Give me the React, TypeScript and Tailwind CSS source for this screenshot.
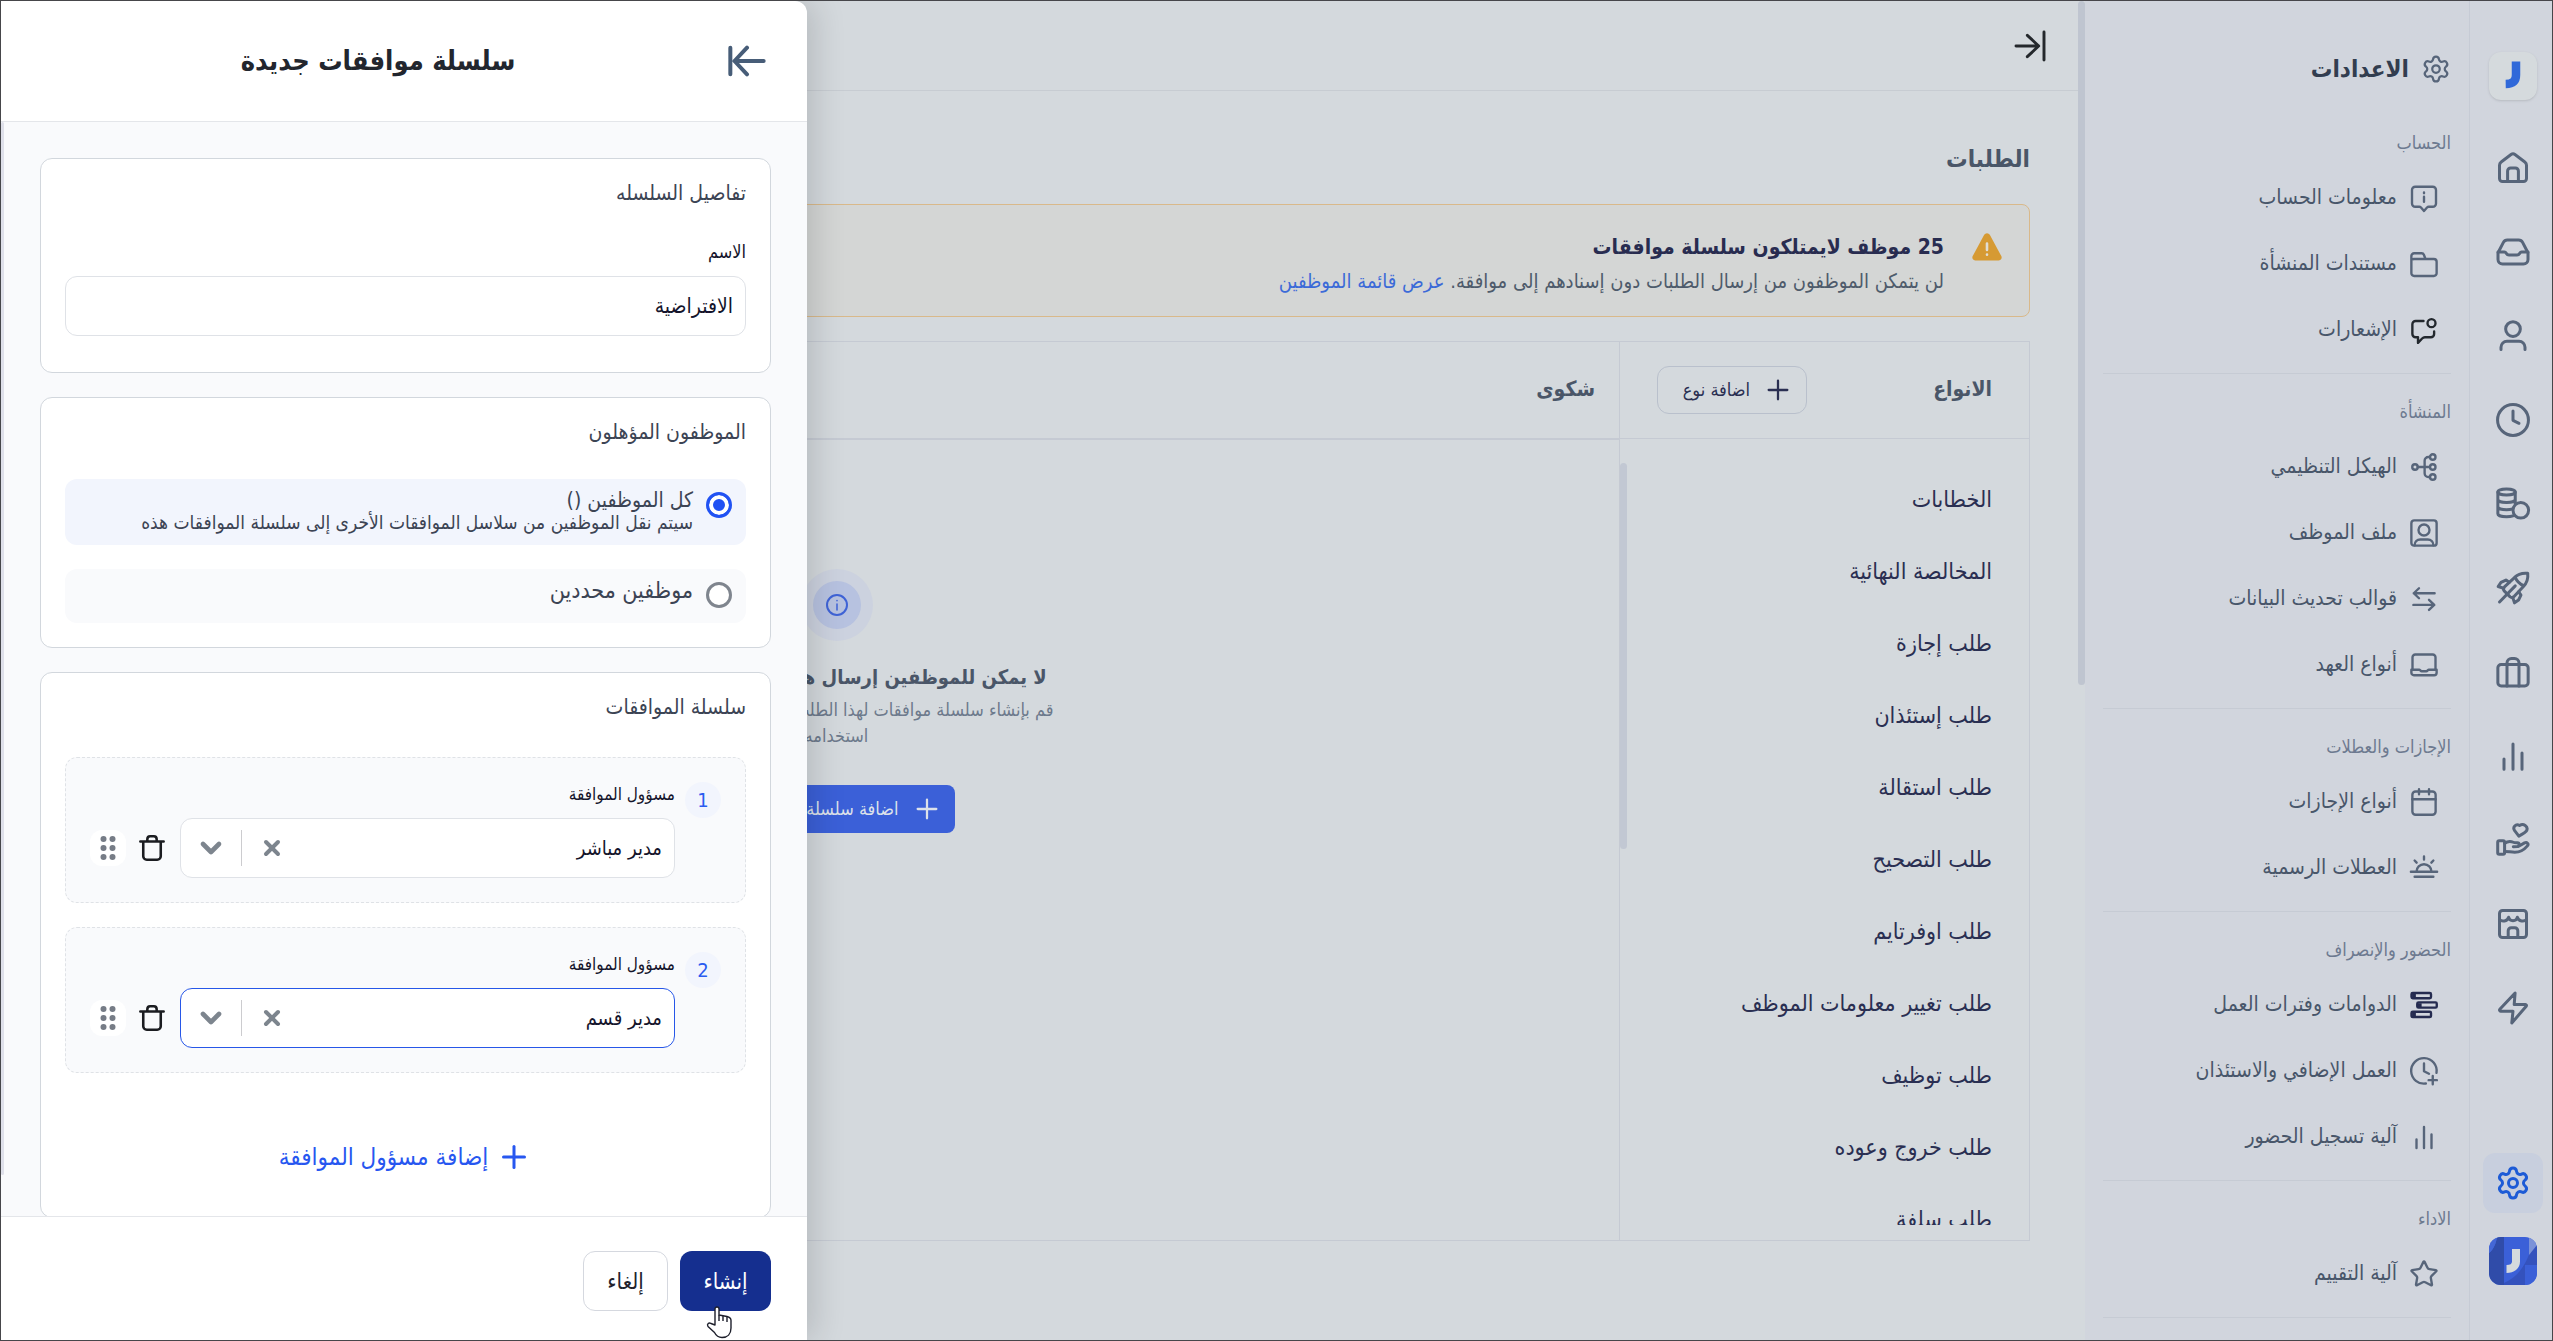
import React, { useState } from 'react';
import { Settings, Star, Plus, ChevronDown, X } from 'lucide-react';

const icons = {
  home: (
    <>
      <path d="M3 10.2c0-.9.4-1.7 1.1-2.2l6.6-5a2.2 2.2 0 0 1 2.6 0l6.6 5c.7.5 1.1 1.3 1.1 2.2V19a2 2 0 0 1-2 2H5a2 2 0 0 1-2-2z" />
      <path d="M8.4 21v-7a2 2 0 0 1 2-2h3.2a2 2 0 0 1 2 2v7" />
    </>
  ),
  inbox: (
    <>
      <path d="M2 12.5 5.6 5.6A3 3 0 0 1 8.2 4h7.6a3 3 0 0 1 2.6 1.6L22 12.5V17a3 3 0 0 1-3 3H5a3 3 0 0 1-3-3z" />
      <path d="M2 12h4.3c.5 0 .9.3 1.2.8.4.7 1 1.2 1.8 1.2h5.4c.8 0 1.4-.5 1.8-1.2.3-.5.7-.8 1.2-.8H22" />
    </>
  ),
  user: (
    <>
      <circle cx="12" cy="7.4" r="4.9" />
      <path d="M4 21v-1.5a4 4 0 0 1 4-4h8a4 4 0 0 1 4 4V21" />
    </>
  ),
  clock: (
    <>
      <circle cx="12" cy="12" r="10.3" />
      <path d="M12 6v6.2l4 2" />
    </>
  ),
  coins: (
    <>
      <ellipse cx="7.7" cy="4" rx="5.8" ry="2" />
      <path d="M1.9 4v14.5c0 1.1 2.6 2 5.8 2 1.7 0 3.2-.2 4.3-.6M13.5 4v8M1.9 9c0 1.1 2.6 2 5.8 2s5.8-.9 5.8-2M1.9 13.8c0 1.1 2.6 2 5.8 2 1.5 0 3-.2 4.2-.6" />
      <circle cx="17.2" cy="16.2" r="5.2" />
    </>
  ),
  rocket: (
    <>
      <path d="M21.8 2.2c-3.3-.4-6.6.6-9 3L6.3 11.3a2 2 0 0 0-.2 2.6l4 4a2 2 0 0 0 2.6-.2l6.1-6.5c2.4-2.4 3.4-5.7 3-9z" />
      <path d="M13.4 4.7c1 2.4 3.4 4.8 5.8 5.8M3 21.3l10.5-10.7M9.5 8.2 7.3 6.7 4 8.3 2.1 11l3.7 1.2M15.8 14.5l1.5 2.2-1.6 3.3-2.7 1.9-1.2-3.7" />
    </>
  ),
  briefcase: (
    <>
      <rect x="1.9" y="7" width="20.2" height="14.3" rx="2.2" />
      <path d="M8 21.3V6a3 3 0 0 1 3-3h2a3 3 0 0 1 3 3v15.3" />
    </>
  ),
  bars: <path d="M6 14v6.8M12 4v16.8M18 10v10.8" />,
  care: (
    <>
      <rect x="1.8" y="12.5" width="4.6" height="9" rx="1" />
      <path d="M6.4 14.2c2.2-1.6 4.3-1.4 5.8-.7.8.4 1.7.3 2.7.3 1.6 0 1.6 2.3 0 2.5l-2.7.2M15.5 16.3l4.2-2.4c1.6-.8 3 .7 1.9 2-2 2.4-5 4.3-8.4 4.3-2.5 0-4.2-.6-6.8-.6" />
      <path d="m15.9 9.4-2.8-3.6c-1.6-2.3.7-5 3.3-3.5 2.6-1.6 5.8.6 4.8 3.3-.4 1-1.5 1.8-5.3 3.8z" />
    </>
  ),
  store: (
    <>
      <rect x="3" y="3" width="18" height="18" rx="2" />
      <path d="M3 9c1.5 1.6 5.2 1.4 6.1-1.5.6 3 5.2 3 5.8 0 .9 2.9 4.6 3.1 6.1 1.5M8.8 21v-4.5a2 2 0 0 1 2-2h2.4a2 2 0 0 1 2 2V21" />
    </>
  ),
  zap: <path d="M13.4 2 3.2 12.9c-.4.5-.1 1.2.5 1.2H12L11.2 22 20.8 10.8c.4-.5.1-1.2-.5-1.2H12.8z" />,
  infoMessage: (
    <>
      <path d="M5 3h14a2.6 2.6 0 0 1 2.6 2.6v10.8A2.6 2.6 0 0 1 19 19h-3.2c-.6 0-1 .2-1.4.6L12 22.4l-2.4-2.8c-.4-.4-.8-.6-1.4-.6H5a2.6 2.6 0 0 1-2.6-2.6V5.6A2.6 2.6 0 0 1 5 3z" />
      <path d="M12 7.5v.6M12 11v4" />
    </>
  ),
  folder: (
    <path d="M1.9 8.5V5.6A2.2 2.2 0 0 1 4.1 3.4h6.1c.8 0 1.4.5 1.7 1.2L13.2 8h6.7a2.2 2.2 0 0 1 2.2 2.2v9.2a2.2 2.2 0 0 1-2.2 2.2H4.1a2.2 2.2 0 0 1-2.2-2.2zm0 0 2-.5h9.3" />
  ),
  notification: (
    <>
      <circle cx="18" cy="6.5" r="3.2" />
      <path d="M11.6 4.8H5.3a2.6 2.6 0 0 0-2.6 2.6v7.8a2.6 2.6 0 0 0 2.6 2.6h1.9v4.5l3.3-3.5c.6-.6 1.3-1 2.2-1h4.8a2.6 2.6 0 0 0 2.6-2.6v-2" />
    </>
  ),
  hierarchy: (
    <>
      <circle cx="4.8" cy="12" r="2.2" />
      <circle cx="19" cy="4" r="2.2" />
      <circle cx="19" cy="12" r="2.2" />
      <circle cx="19" cy="20" r="2.2" />
      <path d="M7 12h9.8M16.8 4h-1.3a3 3 0 0 0-3 3v10a3 3 0 0 0 3 3h1.3" />
    </>
  ),
  profile: (
    <>
      <rect x="1.9" y="1.9" width="20.2" height="20.2" rx="2.2" />
      <circle cx="12" cy="9.6" r="4.4" />
      <path d="M4.5 21.8c0-2.8 1.9-4.6 4.5-4.6h6c2.6 0 4.5 1.8 4.5 4.6" />
    </>
  ),
  swap: <path d="M20.5 7.4H3.8m4.2-4-4.2 4 4.2 4M3.5 16.7h16.7m-4.2-4 4.2 4-4.2 4" />,
  laptop: (
    <>
      <path d="M2.8 15.6V5.8A2.2 2.2 0 0 1 5 3.6h14a2.2 2.2 0 0 1 2.2 2.2v9.8" />
      <path d="M1.9 15.8h6.3c.7 0 1 1.2 2 1.2h3.6c1 0 1.3-1.2 2-1.2h6.3v2.4a2 2 0 0 1-2 2H3.9a2 2 0 0 1-2-2z" />
    </>
  ),
  calendar: (
    <>
      <rect x="2.7" y="3.6" width="18.6" height="18.6" rx="2.6" />
      <path d="M2.7 9.8h18.6M8 1.8v4M16 1.8v4" />
    </>
  ),
  sunrise: <path d="M1.5 15h21M4.5 19h15M6 15a6 6 0 0 1 12 0M12 2.8v2.4M4.5 6l1.6 1.7M19.5 6l-1.6 1.7" />,
  overtime: (
    <>
      <path d="M13.5 22a10.2 10.2 0 1 1 8.5-8.5" />
      <path d="M12 6v6.2l4 2M19 16v6.6M15.7 19.3h6.6" />
    </>
  ),
  shifts: (
    <>
      <rect x="2" y="2.4" width="15.6" height="4.2" rx="1" />
      <rect x="6.6" y="9.9" width="15.6" height="4.2" rx="1" />
      <rect x="2" y="17.4" width="15.6" height="4.2" rx="1" />
      <path d="M4 3v3M8.6 10.5v3M4 18v3" strokeWidth="3" strokeLinecap="butt" />
    </>
  ),
  trash: <path d="M2 6.5h20M8 6V4.6C8 3 8.9 2 10.4 2h3.2C15.1 2 16 3 16 4.6V6M4.5 6.5V19a3 3 0 0 0 3 3h9a3 3 0 0 0 3-3V6.5" />,
  collapse: <path d="M22.5 1.5v21M1.5 12h17M10 4l8.5 8-8.5 8" />,
  close: <path d="M22 4v16M2 12h17.5M12 4l7.5 8-7.5 8" />,
};

type IconName = keyof typeof icons;

function Icon({ name, className, stroke = 1.9 }: { name: IconName; className?: string; stroke?: number }) {
  return (
    <svg
      viewBox="0 0 24 24"
      fill="none"
      stroke="currentColor"
      strokeWidth={stroke}
      strokeLinecap="round"
      strokeLinejoin="round"
      className={className}
      aria-hidden="true"
    >
      {icons[name]}
    </svg>
  );
}

const railItems: { name: IconName; label: string }[] = [
  { name: 'home', label: 'الرئيسية' },
  { name: 'inbox', label: 'الوارد' },
  { name: 'user', label: 'الموظفين' },
  { name: 'clock', label: 'الحضور' },
  { name: 'coins', label: 'الرواتب' },
  { name: 'rocket', label: 'الاداء' },
  { name: 'briefcase', label: 'التوظيف' },
  { name: 'bars', label: 'التقارير' },
  { name: 'care', label: 'المزايا' },
  { name: 'store', label: 'المتجر' },
  { name: 'zap', label: 'الأتمتة' },
];

const sections: { title: string; items: { icon: IconName | 'star'; label: string; tone?: string }[] }[] = [
  {
    title: 'الحساب',
    items: [
      { icon: 'infoMessage', label: 'معلومات الحساب' },
      { icon: 'folder', label: 'مستندات المنشأة' },
      { icon: 'notification', label: 'الإشعارات', tone: 'text-[#23282e]' },
    ],
  },
  {
    title: 'المنشأة',
    items: [
      { icon: 'hierarchy', label: 'الهيكل التنظيمي' },
      { icon: 'profile', label: 'ملف الموظف' },
      { icon: 'swap', label: 'قوالب تحديث البيانات' },
      { icon: 'laptop', label: 'أنواع العهد' },
    ],
  },
  {
    title: 'الإجازات والعطلات',
    items: [
      { icon: 'calendar', label: 'أنواع الإجازات' },
      { icon: 'sunrise', label: 'العطلات الرسمية' },
    ],
  },
  {
    title: 'الحضور والإنصراف',
    items: [
      { icon: 'shifts', label: 'الدوامات وفترات العمل', tone: 'text-[#252b50]' },
      { icon: 'overtime', label: 'العمل الإضافي والاستئذان' },
      { icon: 'bars', label: 'آلية تسجيل الحضور' },
    ],
  },
  { title: 'الاداء', items: [{ icon: 'star', label: 'آلية التقييم' }] },
];

const requestTypes = [
  'الخطابات',
  'المخالصة النهائية',
  'طلب إجازة',
  'طلب إستئذان',
  'طلب استقالة',
  'طلب التصحيح',
  'طلب اوفرتايم',
  'طلب تغيير معلومات الموظف',
  'طلب توظيف',
  'طلب خروج وعوده',
  'طلب سلفة',
];

function Rail() {
  return (
    <nav className="flex w-[83px] shrink-0 flex-col items-center border-l border-[#c6cbd5] bg-[#d1d5dd] pt-[51px] pl-[3px] text-[#57657a]">
      <div className="h-12 w-12 shrink-0 rounded-xl bg-[#d5dadd] shadow">
        <svg viewBox="0 0 48 48" className="h-12 w-12" aria-hidden="true">
          <path d="M27 9.5V23c0 6-3.5 8.8-10.3 8.9" fill="none" stroke="#3069d9" strokeWidth="8.5" />
        </svg>
      </div>
      <div className="mt-[26px] flex flex-col">
        {railItems.map((item) => (
          <button key={item.name} type="button" aria-label={item.label} className="flex h-[84px] w-[60px] items-center justify-center">
            <Icon name={item.name} className="h-9 w-9" stroke={2} />
          </button>
        ))}
      </div>
      <div className="mt-auto flex flex-col items-center gap-6 pb-[55px]">
        <button type="button" aria-label="الاعدادات" className="flex h-[60px] w-[60px] items-center justify-center rounded-xl bg-[#c8cfde] text-[#1d5bd6]">
          <Settings className="h-9 w-9" strokeWidth={2} />
        </button>
        <svg viewBox="0 0 48 48" className="h-12 w-12 rounded-xl" aria-hidden="true">
          <rect width="48" height="48" fill="#3b60d8" />
          <path d="M0 16C5 12 7 6 8 0h7v48H0z" fill="#304ca9" />
          <path d="M0 16C5 12 7 6 8 0H0z" fill="#4467d6" />
          <path d="M15 46c14-6 22-18 27-34l6-4v20H36v20H15z" fill="#3452bd" />
          <path d="M36 28h12v20H36z" fill="#3b60d8" />
          <path d="M40 0h8v8l-8 10z" fill="#7b92d8" />
          <path d="M27 12v12.5c0 4.5-3.5 7.5-9.5 7.5" fill="none" stroke="#d5dadd" strokeWidth="8" />
        </svg>
      </div>
    </nav>
  );
}

function SettingsMenu() {
  return (
    <aside className="w-[384px] shrink-0 overflow-hidden bg-[#d1d5dd] px-[18px]">
      <div className="flex h-[104px] items-center gap-3 pt-8 text-[#57657a]">
        <Settings className="h-[30px] w-[30px]" strokeWidth={1.8} />
        <h2 className="text-2xl font-bold text-[#323d4f]">الاعدادات</h2>
      </div>
      {sections.map((section) => (
        <section key={section.title} className="border-b border-[#c6cbd4] pb-[10px]">
          <h3 className="pt-6 pb-2 text-lg leading-7 text-[#6d7a90]">{section.title}</h3>
          {section.items.map((item) => (
            <a key={item.label} href="#" className="flex h-[66px] items-center gap-3 pr-3 text-[21px] text-[#48566a]">
              {item.icon === 'star' ? (
                <Star className="h-[30px] w-[30px] text-[#57657a]" strokeWidth={1.9} />
              ) : (
                <Icon name={item.icon} className={`h-[30px] w-[30px] ${item.tone ?? 'text-[#57657a]'}`} />
              )}
              {item.label}
            </a>
          ))}
        </section>
      ))}
    </aside>
  );
}

function TypesColumn() {
  return (
    <div className="flex w-[410px] shrink-0 flex-col border-l border-[#c5cad3]">
      <div className="flex h-[97px] shrink-0 items-center justify-between border-b border-[#c5cad3] px-[37px]">
        <h2 className="text-[21px] font-bold text-[#4a5668]">الانواع</h2>
        <button type="button" className="flex h-12 w-[150px] items-center gap-3 rounded-xl border border-[#b9c0cc] pr-3 text-lg text-[#2a2f52]">
          <Plus className="h-8 w-8" strokeWidth={1.7} />
          اضافة نوع
        </button>
      </div>
      <div className="mt-6 mb-[15px] flex min-h-0 grow overflow-hidden">
        <ul className="grow pr-[37px]">
          {requestTypes.map((type) => (
            <li key={type}>
              <a href="#" className="flex h-[72px] items-center text-[23px] text-[#2a2f52]">
                {type}
              </a>
            </li>
          ))}
        </ul>
        <div className="h-[386px] w-[7px] rounded-full bg-[#c2c8d3]" />
      </div>
    </div>
  );
}

function EmptyState() {
  return (
    <div className="flex grow flex-col items-center pt-[129px] pl-1 text-center">
      <div className="flex h-[72px] w-[72px] items-center justify-center rounded-full bg-[#ccd2df]">
        <div className="flex h-12 w-12 items-center justify-center rounded-full bg-[#b7c2e0] text-[#3f63d6]">
          <svg viewBox="0 0 24 24" fill="none" stroke="currentColor" strokeWidth="2" strokeLinecap="round" className="h-6 w-6" aria-hidden="true">
            <circle cx="12" cy="12" r="10" />
            <path d="M12 7.5v.2M12 11v6" strokeWidth="1.5" />
          </svg>
        </div>
      </div>
      <h3 className="mt-5 text-xl leading-8 font-bold text-[#4a5668]">لا يمكن للموظفين إرسال هذا النوع من الطلبات</h3>
      <p className="mt-1 text-lg leading-[26px] text-[#6d7a8c]">
        قم بإنشاء سلسلة موافقات لهذا الطلب لكي يتمكن الموظفين من
        <br />
        استخدامه
      </p>
      <button type="button" className="mt-9 flex h-12 w-[236px] items-center gap-3 rounded-lg bg-[#3b60d8] pr-3 text-lg text-[#dde2ea]">
        <Plus className="h-8 w-8" strokeWidth={1.7} />
        اضافة سلسلة موافقات
      </button>
    </div>
  );
}

function RequestsPage() {
  return (
    <main className="flex min-w-0 grow flex-col bg-[#d4d9dd]">
      <header className="flex h-[90px] shrink-0 items-start border-b border-[#c7ccd2] pt-[29px] pr-8 text-[#24282c]">
        <button type="button" aria-label="طي القائمة">
          <Icon name="collapse" className="h-8 w-8" stroke={2.2} />
        </button>
      </header>
      <div className="flex min-h-0 grow flex-col px-12 pt-12 pb-[99px]">
        <h1 className="text-2xl leading-10 font-bold text-[#4a5668]">الطلبات</h1>
        <div className="mt-[25px] flex h-[113px] shrink-0 gap-7 rounded-lg border border-[#d9b98a] bg-[#d4d6d5] pt-6 pr-[27px]">
          <svg viewBox="0 0 30 28" className="mt-1 h-7 w-[30px] shrink-0" aria-hidden="true">
            <path d="M12.2 1.8a3.2 3.2 0 0 1 5.6 0l11.5 21.3a3 3 0 0 1-2.6 4.4H3.3a3 3 0 0 1-2.6-4.4z" fill="#d69a33" />
            <path d="M15 10.5v6.5M15 21.5v.2" stroke="#e0ddd4" strokeWidth="2.6" strokeLinecap="round" />
          </svg>
          <div>
            <h2 className="text-[21px] leading-9 font-bold text-[#282c50]">25 موظف لايمتلكون سلسلة موافقات</h2>
            <p className="text-xl leading-8 text-[#4e5b6b]">
              لن يتمكن الموظفون من إرسال الطلبات دون إسنادهم إلى موافقة.{' '}
              <a href="#" className="text-[#3b6ad8]">
                عرض قائمة الموظفين
              </a>
            </p>
          </div>
        </div>
        <div className="mt-6 flex min-h-0 grow border border-[#c5cad3]">
          <TypesColumn />
          <div className="flex min-w-0 grow flex-col">
            <div className="flex h-[98px] shrink-0 items-center border-b-2 border-[#c5cad3] pr-6">
              <h2 className="text-[21px] font-bold text-[#4a5668]">شكوى</h2>
            </div>
            <EmptyState />
          </div>
        </div>
      </div>
    </main>
  );
}

function Card({ title, children }: { title: string; children: React.ReactNode }) {
  return (
    <section className="shrink-0 rounded-xl border border-[#d2d7dd] bg-white px-6 pt-4">
      <h3 className="text-[21px] leading-9 text-[#3c4454]">{title}</h3>
      {children}
    </section>
  );
}

function ApproverRow({ index, value, active }: { index: number; value: string; active?: boolean }) {
  const id = `approver-${index}`;
  return (
    <div className="flex h-[146px] rounded-xl border border-dashed border-[#dfe2e6] bg-[#f9fafc] px-6 pt-6">
      <span className="flex h-9 w-9 items-center justify-center rounded-full bg-[#f2f5fd] text-xl text-[#2b5cf0]">{index}</span>
      <div className="mr-[10px] grow">
        <label htmlFor={id} className="block pb-3 text-[17px] leading-6 text-[#14142b]">
          مسؤول الموافقة
        </label>
        <div className={`flex h-[60px] items-center rounded-xl border bg-white pr-3 ${active ? 'border-[#2757e8]' : 'border-[#dfe2e7]'}`}>
          <select id={id} defaultValue={value} className="h-full min-w-0 grow appearance-none bg-transparent text-xl text-[#14142b] outline-none">
            <option>مدير مباشر</option>
            <option>مدير قسم</option>
          </select>
          <button type="button" aria-label="مسح" className="px-[18px] text-[#7d858e]">
            <X className="h-6 w-6" strokeWidth={4} />
          </button>
          <span className="h-9 w-px bg-[#cccccf]" />
          <span className="px-[14px] text-[#7d858e]">
            <ChevronDown className="h-8 w-8" strokeWidth={3.5} />
          </span>
        </div>
      </div>
      <div className="mt-9 mr-[14px] flex h-[60px] items-center gap-3">
        <button type="button" aria-label="حذف" className="text-[#1b1c20]">
          <Icon name="trash" className="h-8 w-7" stroke={2.2} />
        </button>
        <button type="button" aria-label="تحريك" className="flex h-9 w-9 items-center justify-center rounded-xl bg-white text-[#767c86]">
          <svg viewBox="0 0 16 24" fill="currentColor" className="h-6 w-4" aria-hidden="true">
            {[3, 12, 21].map((y) => (
              <g key={y}>
                <circle cx="3.5" cy={y} r="3" />
                <circle cx="12.5" cy={y} r="3" />
              </g>
            ))}
          </svg>
        </button>
      </div>
    </div>
  );
}

const radioClass =
  'mt-1 h-[26px] w-[26px] shrink-0 appearance-none rounded-full border-[3px] border-[#7f858e] bg-white checked:border-[#2152f3] checked:bg-[#2152f3] checked:shadow-[inset_0_0_0_4px_white]';

function Drawer() {
  const [scope, setScope] = useState('all');
  const [name, setName] = useState('الافتراضية');

  return (
    <div
      role="dialog"
      aria-label="سلسلة موافقات جديدة"
      className="absolute inset-y-0 left-0 flex w-[806px] max-w-full flex-col overflow-hidden rounded-tr-xl bg-white shadow-[8px_0_32px_rgba(0,0,0,0.14)]"
    >
      <header className="flex h-[121px] shrink-0 items-center border-b border-[#e4e6ea] px-10">
        <button type="button" aria-label="إغلاق" className="rotate-180 text-[#475d78]">
          <Icon name="close" className="h-10 w-10" stroke={2.4} />
        </button>
        <h2 className="grow pr-3 text-center text-[27px] font-bold text-[#22262e]">سلسلة موافقات جديدة</h2>
      </header>

      <div className="flex min-h-0 grow overflow-hidden bg-[#f9fafc]">
        <div className="flex min-w-0 grow flex-col gap-6 px-9 pt-9">
          <Card title="تفاصيل السلسله">
            <div className="pt-[25px] pb-9">
              <label htmlFor="chain-name" className="block pb-2 text-lg leading-8 text-[#14142b]">
                الاسم
              </label>
              <input
                id="chain-name"
                value={name}
                onChange={(e) => setName(e.target.value)}
                className="h-[60px] w-full rounded-xl border border-[#dfe2e7] px-3 text-[21px] text-[#14142b]"
              />
            </div>
          </Card>

          <Card title="الموظفون المؤهلون">
            <div className="flex flex-col gap-6 pt-[29px] pb-6">
              <label className="flex min-h-[66px] items-start gap-[13px] rounded-xl bg-[#f2f5fd] px-[14px] py-[9px]">
                <input type="radio" name="scope" checked={scope === 'all'} onChange={() => setScope('all')} className={radioClass} />
                <span className="text-[#3c4454]">
                  <span className="block text-[21px] leading-6">كل الموظفين ()</span>
                  <span className="block text-[19px] leading-5">سيتم نقل الموظفين من سلاسل الموافقات الأخرى إلى سلسلة الموافقات هذه</span>
                </span>
              </label>
              <label className="flex min-h-[54px] items-start gap-[13px] rounded-xl bg-[#f9fafc] px-[14px] py-[9px]">
                <input type="radio" name="scope" checked={scope === 'some'} onChange={() => setScope('some')} className={radioClass} />
                <span className="text-[23px] leading-6 text-[#3c4454]">موظفين محددين</span>
              </label>
            </div>
          </Card>

          <Card title="سلسلة الموافقات">
            <div className="flex flex-col gap-6 pt-8 pb-[42px]">
              <ApproverRow index={1} value="مدير مباشر" />
              <ApproverRow index={2} value="مدير قسم" active />
              <button type="button" className="mt-[42px] flex items-center justify-center gap-2 text-2xl leading-9 text-[#2757f0]">
                <Plus className="h-9 w-9" strokeWidth={2} />
                إضافة مسؤول الموافقة
              </button>
            </div>
          </Card>
        </div>
        <div className="h-[1053px] w-[3px] rounded-full bg-[#dfe0ea]" />
      </div>

      <footer className="flex h-[124px] shrink-0 gap-3 border-t border-[#e4e6ea] bg-white pt-[34px] pr-9">
        <button type="button" className="relative h-[60px] w-[91px] rounded-xl bg-[#152f8f] text-[22px] text-white">
          إنشاء
          {/* pointer over the primary action */}
          <svg viewBox="0 0 26 33" className="absolute -bottom-7 left-[26px] h-[33px] w-[26px]" aria-hidden="true">
            <path
              d="M9 19V3a2 2 0 0 1 4 0v6l8 1.5c2.5.5 4 1.5 4 4V22c0 6-3.5 9.5-9 9.5-4 0-6-2-7.5-5L2 20.5c-1.5-2.5 1-4.5 3-3z"
              fill="#fff"
              stroke="#1d1f2b"
              strokeWidth="1.4"
              strokeLinejoin="round"
            />
            <path d="M13 9v6M17 10v5M21 11v5" stroke="#1d1f2b" strokeWidth="1.4" />
          </svg>
        </button>
        <button type="button" className="h-[60px] w-[85px] rounded-xl border border-[#d5d8df] bg-white text-[22px] text-[#22222c]">
          إلغاء
        </button>
      </footer>
    </div>
  );
}

export default function App() {
  return (
    <div
      dir="rtl"
      lang="ar"
      className="relative flex h-screen overflow-hidden border border-[#46464a] bg-[#d4d9dd] font-['DejaVu_Sans_Condensed','DejaVu_Sans',sans-serif]"
    >
      <Rail />
      <SettingsMenu />
      <div className="h-[684px] w-[7px] shrink-0 rounded-full bg-[#bfc5d0]" />
      <RequestsPage />
      <Drawer />
    </div>
  );
}
